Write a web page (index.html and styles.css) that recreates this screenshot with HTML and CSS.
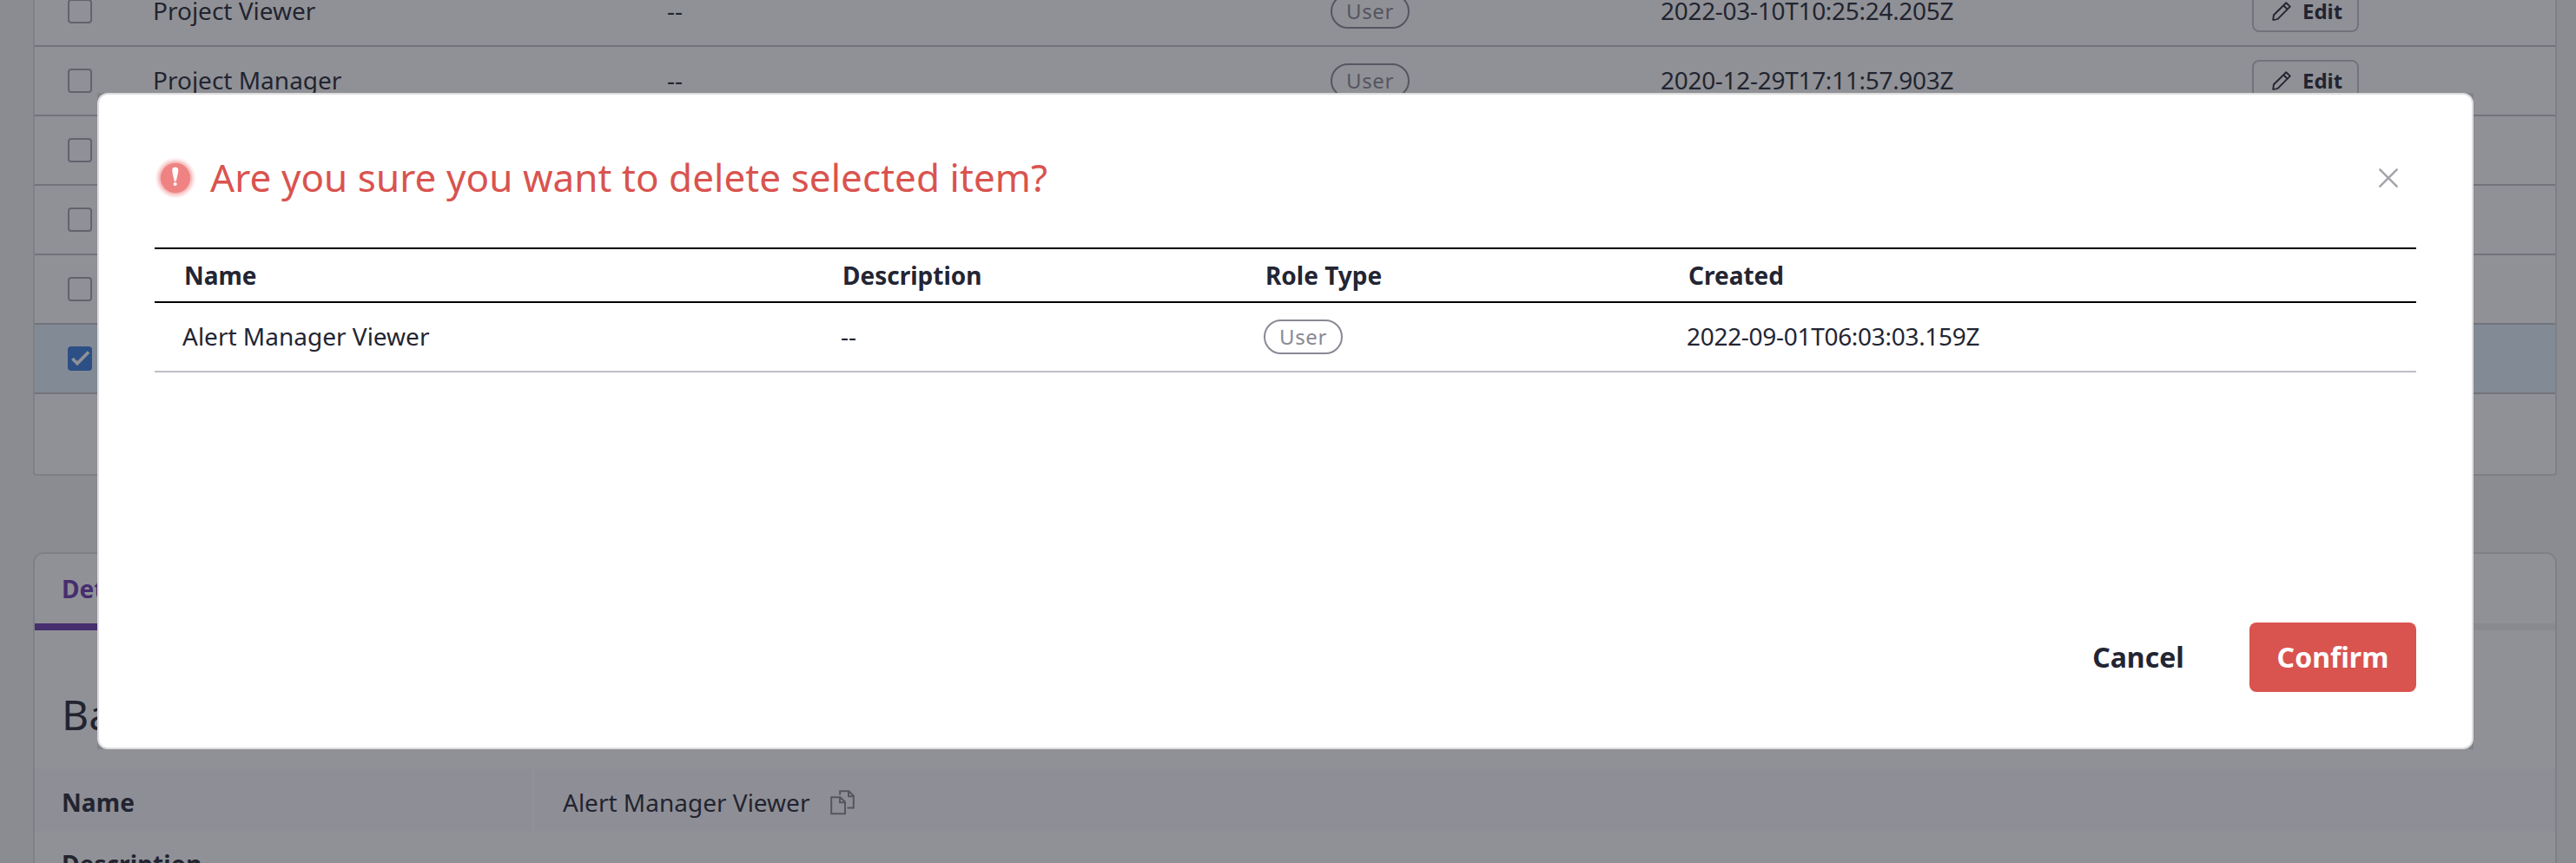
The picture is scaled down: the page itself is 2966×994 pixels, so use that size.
FILE: index.html
```html
<!DOCTYPE html>
<html lang="en">
<head>
<meta charset="utf-8">
<title>Roles</title>
<link rel="stylesheet" href="styles.css">
</head>
<body>
<svg class="sprite" aria-hidden="true">
  <symbol id="pencil" viewBox="0 0 22 22"><path d="M1.2 20.8 L2 15.2 L16.3 1.2 L20.8 5.6 L6.6 19.8 Q4.5 21 1.2 20.8 Z M13.2 4.3 L17.7 8.7" fill="none" stroke="currentColor" stroke-width="1.9" stroke-linejoin="round"/></symbol>
</svg>
<div class="page">
  <section class="card roles">
    <div class="row">
      <span class="check"></span><span class="text">Project Viewer</span><span class="text">--</span>
      <span><span class="badge">User</span></span><span class="text date">2022-03-10T10:25:24.205Z</span>
      <button class="edit"><svg class="pencil"><use href="#pencil"/></svg>Edit</button>
    </div>
    <div class="row">
      <span class="check"></span><span class="text">Project Manager</span><span class="text">--</span>
      <span><span class="badge">User</span></span><span class="text date">2020-12-29T17:11:57.903Z</span>
      <button class="edit"><svg class="pencil"><use href="#pencil"/></svg>Edit</button>
    </div>
    <div class="row"><span class="check"></span></div>
    <div class="row"><span class="check"></span></div>
    <div class="row"><span class="check"></span></div>
    <div class="row selected">
      <span class="check checked"><svg viewBox="0 0 28 28"><path d="M5.3 14 L11 19.6 L24 6.6" fill="none" stroke="#fff" stroke-width="3.6"/></svg></span>
    </div>
  </section>
  <section class="card details">
    <div class="tabs"><span class="tab">Details</span></div>
    <h2 class="heading">Base Information</h2>
    <div class="def striped">
      <b>Name</b>
      <span class="value">Alert Manager Viewer
        <svg class="copy" viewBox="0 0 28 29"><path d="M1.2 8.2 H11.5 L17 13.7 V27.2 H1.2 Z M11 8.2 V14.2 H17 M11.2 5.5 V1.2 H21.5 L26.8 6.7 V20.5 H19.5 M21 1.2 V7.2 H26.8" fill="none" stroke="currentColor" stroke-width="2"/></svg>
      </span>
    </div>
    <div class="def"><b>Description</b></div>
  </section>
</div>
<div class="backdrop">
  <div class="modal-frame">
    <div class="modal">
      <header class="modal-head">
        <svg class="alert" viewBox="0 0 48 48">
          <circle cx="24" cy="24" r="23" fill="#ef8383" opacity=".13"/>
          <circle cx="24" cy="24" r="21" fill="#ef8383" opacity=".2"/>
          <circle cx="24" cy="24" r="19.2" fill="#ef8383" opacity=".3"/>
          <circle cx="24" cy="24" r="17.2" fill="#ef8383"/>
          <path d="M20.3 14.5 C20.3 10.5 27.3 10.5 27.3 14.5 C27.3 18 25.6 24 25 27 C24.8 28.2 22.8 28.2 22.6 27 C22 24 20.3 18 20.3 14.5 Z" fill="#fff"/>
          <circle cx="23.7" cy="31" r="2" fill="#fff"/>
        </svg>
        <h1 class="title">Are you sure you want to delete selected item?</h1>
        <svg class="close" viewBox="0 0 24 24"><path d="M2.3 2.3 L21.7 21.7 M21.7 2.3 L2.3 21.7" stroke="#a5a5ad" stroke-width="2.6" stroke-linecap="round"/></svg>
      </header>
      <div class="table">
        <div class="thead"><span>Name</span><span>Description</span><span>Role Type</span><span>Created</span></div>
        <div class="tbody"><span class="text">Alert Manager Viewer</span><span class="text">--</span><span><span class="badge">User</span></span><span class="text date">2022-09-01T06:03:03.159Z</span></div>
      </div>
      <footer class="actions">
        <button class="btn cancel">Cancel</button>
        <button class="btn confirm">Confirm</button>
      </footer>
    </div>
  </div>
</div>
</body>
</html>
```
FILE: styles.css
```css
* { box-sizing: border-box; }
body {
  margin: 0;
  height: 994px;
  overflow: hidden;
  background: #f3f5f5;
  color: #232533;
  font: 28px/40px "Noto Sans", sans-serif;
}
button { font-family: inherit; color: inherit; background: none; border: 0; padding: 0; }
.sprite { display: none; }
.text { padding-bottom: 2px; white-space: nowrap; }
.date { letter-spacing: -0.3px; }
.page { height: 994px; overflow: hidden; padding: 0 22px 0 38px; }
.card { background: #fff; border: 2px solid #dddddf; }
.roles { height: 548px; border-top: 0; border-radius: 0 0 4px 4px; overflow: hidden; }
.row {
  display: grid;
  grid-template-columns: 136px 592px 764px 380px 681px 1fr;
  align-items: center;
  height: 80px;
  border-bottom: 2px solid #c4c4c8;
}
.row:first-child { margin-top: -26px; }
.row.selected { background: #e3f0ff; }
.check { display: block; width: 28px; height: 28px; margin-left: 38px; border: 2px solid #a2a2ae; border-radius: 4px; }
.check.checked { background: #377bdd; border: 0; }
.check.checked svg { display: block; width: 28px; height: 28px; }
.badge {
  display: flex;
  align-items: center;
  justify-content: center;
  width: 91px;
  height: 40px;
  border: 2px solid #898995;
  border-radius: 20px;
  color: #898995;
  font-size: 24px;
  letter-spacing: 0.6px;
}
.edit {
  display: flex;
  align-items: center;
  gap: 13px;
  width: 123px;
  height: 48px;
  padding: 0 0 2px 21px;
  border: 2px solid #c4c4c8;
  border-radius: 8px;
  font-size: 24px;
  font-weight: 700;
}
.pencil { width: 22px; height: 22px; margin-top: 2px; }
.details { margin-top: 88px; height: 420px; border-radius: 12px; }
.tabs { height: 88px; border-bottom: 8px solid #f0f0f2; }
.tab {
  display: block;
  width: 160px;
  height: 88px;
  padding: 20px 0 0 31px;
  border-bottom: 8px solid #6b39b1;
  color: #6b39b1;
  font-weight: 700;
}
.heading { margin: 0; height: 160px; padding: 65px 0 0 31px; font-size: 48px; line-height: 64px; font-weight: 400; }
.def { display: grid; grid-template-columns: 572px 1fr; column-gap: 4px; height: 71px; }
.def b { padding: 18px 0 0 31px; letter-spacing: 0.1px; }
.value { display: flex; gap: 24px; padding: 18px 0 0 32px; }
.striped > * { background: #fbf9ff; }
.copy { width: 28px; height: 29px; margin-top: 6px; color: #898995; }
.backdrop {
  position: absolute;
  inset: 0;
  padding: 107px 118px 131px 112px;
  background: rgba(33, 35, 45, 0.5);
}
.modal-frame { height: 756px; background: rgba(100, 100, 108, 0.3); }
.modal {
  display: flex;
  flex-direction: column;
  height: 756px;
  padding: 64px;
  background: #fff;
  border: 2px solid #dddddf;
  border-radius: 12px;
}
.modal-head { display: flex; align-items: center; height: 64px; }
.alert { width: 48px; height: 48px; }
.title { flex: 1; margin: 0 0 0 16px; padding-bottom: 2px; color: #d9534f; font-size: 44px; line-height: 64px; font-weight: 400; letter-spacing: 0.06px; white-space: nowrap; }
.close { width: 24px; height: 24px; margin-right: 20px; }
.table { margin-top: 48px; }
.thead, .tbody { display: grid; grid-template-columns: 758px 487px 487px 1fr; align-items: center; }
.thead { height: 64px; padding-left: 34px; border: solid #000; border-width: 2px 0; font-weight: 700; }
.tbody { height: 80px; padding-left: 32px; border-bottom: 2px solid #bfbfc5; }
.actions { display: flex; justify-content: flex-end; margin-top: auto; }
.btn { height: 80px; padding-bottom: 2px; font-size: 32px; font-weight: 700; border-radius: 8px; }
.cancel { width: 168px; margin-right: 44px; }
.confirm { width: 192px; background: #d9534f; color: #fff; }
```
